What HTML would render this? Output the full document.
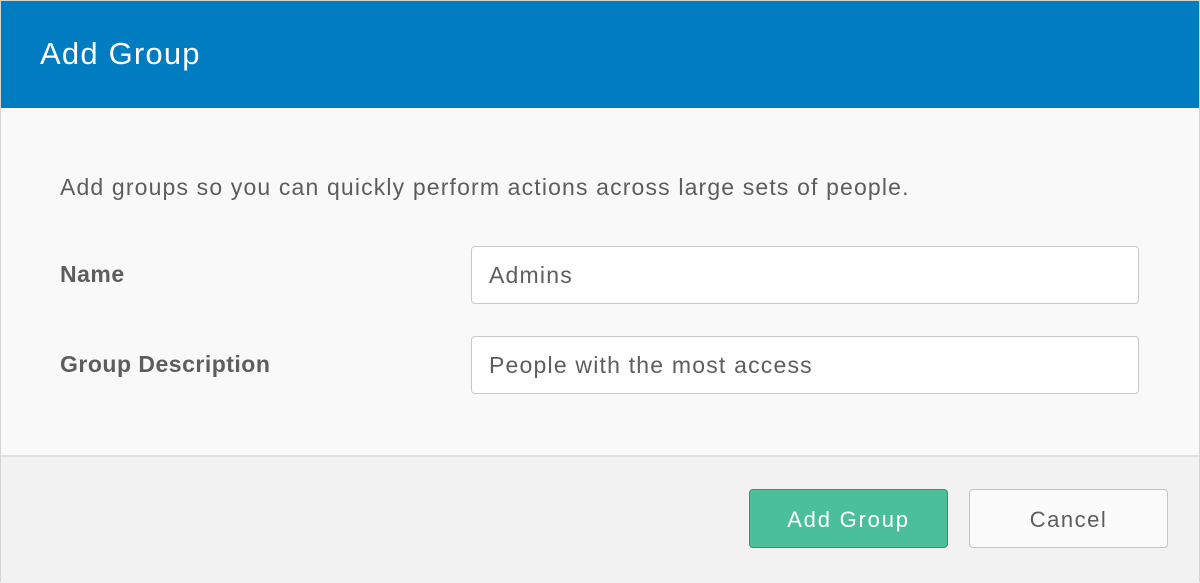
<!DOCTYPE html>
<html><head><style>
body{margin:0;width:1200px;height:582px;overflow:hidden;font-family:"Liberation Sans",sans-serif;background:#fff}
.box{position:absolute;left:0;top:0;width:1198px;height:580px;border:1px solid #d4d4d4;background:#f9f9f9}
.hd{position:absolute;left:0;top:0;width:1198px;height:107px;background:#007dc1;color:#fff;font-size:31px;letter-spacing:1.2px}
.hd span{position:absolute;left:39px;top:35px}
.t{position:absolute;color:#5d5d5d;font-size:23px;letter-spacing:1.15px}
.b{font-weight:bold;letter-spacing:0.5px}
.in{position:absolute;left:470px;width:668px;height:58px;border:1px solid #c8c8c8;border-radius:4px;background:#fff;box-sizing:border-box;padding-left:17px;line-height:56px;font-size:23px;letter-spacing:1.2px;color:#5d5d5d}
.ft{position:absolute;left:0;top:454px;width:1198px;height:126px;background:#f2f2f2;border-top:2px solid #e0e0e0}
.btn{position:absolute;top:489px;height:59px;box-sizing:border-box;border-radius:4px;font-size:22px;text-align:center;line-height:59px}
</style></head><body>
<div class="box">
<div class="hd"><span>Add Group</span></div>
<div class="t" style="left:59px;top:173px">Add groups so you can quickly perform actions across large sets of people.</div>
<div class="t b" style="left:59px;top:260px">Name</div>
<div class="t b" style="left:59px;top:350px">Group Description</div>
<div class="in" style="top:245px">Admins</div>
<div class="in" style="top:335px">People with the most access</div>
<div class="ft"></div>
</div>
<div class="btn" style="left:749px;width:199px;background:#4bbf9a;border:1px solid #3a8f72;color:#fff;letter-spacing:1.8px">Add Group</div>
<div class="btn" style="left:969px;width:199px;background:#fbfbfb;border:1px solid #c4c4c4;color:#5d5d5d;letter-spacing:1.5px">Cancel</div>
</body></html>
